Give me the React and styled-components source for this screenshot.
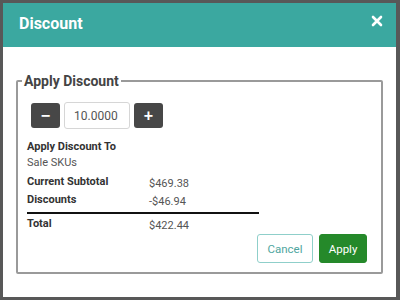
import React from "react";
import styled, { createGlobalStyle } from "styled-components";

const GlobalStyle = createGlobalStyle`
  html, body {
    margin: 0;
    padding: 0;
    width: 400px;
    height: 300px;
    background: #585858;
    font-family: Roboto, "Liberation Sans", sans-serif;
    overflow: hidden;
  }
`;

const Backdrop = styled.div`
  width: 400px;
  height: 300px;
  padding: 3px 4px 3px 3px;
  box-sizing: border-box;
`;

const Modal = styled.div`
  width: 393px;
  height: 294px;
  background: #fff;
  display: flex;
  flex-direction: column;
`;

const Header = styled.div`
  height: 44px;
  background: #3ba8a0;
  display: flex;
  align-items: center;
  justify-content: space-between;
  padding: 0 13px 4px 16px;
  box-sizing: border-box;
`;

const Title = styled.h2`
  margin: 0;
  color: #fff;
  font-size: 16px;
  font-weight: 700;
`;

const Close = styled.button`
  border: 0;
  background: none;
  padding: 0;
  width: 12px;
  height: 12px;
  margin-top: -5px;
  cursor: pointer;
  display: flex;
`;

const Body = styled.div`
  padding: 26px 13px 0 13px;
`;

const Fieldset = styled.fieldset`
  margin: 0;
  border: 2px solid #9a9a9a;
  border-radius: 2px;
  padding: 13px 14px 10px 9px;
  height: 201px;
  box-sizing: border-box;
  display: flex;
  flex-direction: column;
`;

const Legend = styled.legend`
  font-size: 14px;
  font-weight: 700;
  color: #444;
  padding: 0 2px;
  margin-left: -5px;
`;

const Stepper = styled.div`
  display: flex;
  align-items: center;
  gap: 4px;
  margin: 0 0 10px 4px;
`;

const StepButton = styled.button`
  width: 29px;
  height: 25px;
  border: 0;
  border-radius: 3px;
  background: #474747;
  color: #fff;
  font-size: 16px;
  font-weight: 700;
  display: flex;
  align-items: center;
  justify-content: center;
  padding: 0;
`;

const Amount = styled.input`
  width: 66px;
  height: 27px;
  box-sizing: border-box;
  border: 1px solid #d6d6d6;
  border-radius: 3px;
  padding: 0 9px;
  font-family: inherit;
  font-size: 12px;
  color: #555;
`;

const Label = styled.div`
  font-size: 11px;
  font-weight: 700;
  color: #333;
  line-height: 16px;
`;

const Note = styled.div`
  font-size: 11px;
  color: #555;
  line-height: 16px;
  margin-bottom: 3px;
`;

const Row = styled.div`
  display: grid;
  grid-template-columns: 122px 1fr;
  width: 232px;
  font-size: 11px;
  line-height: 16px;
  color: #333;
  border-bottom: ${(p) => (p.$rule ? "2px solid #111" : "0")};
  padding-bottom: ${(p) => (p.$rule ? "2px" : "0")};
  margin-bottom: ${(p) => (p.$rule ? "2px" : "0")};
`;

const Key = styled.span`
  font-weight: 700;
`;

const Value = styled.span`
  color: #555;
  padding-top: 2px;
`;

const Actions = styled.div`
  display: flex;
  justify-content: flex-end;
  gap: 6px;
  margin-top: auto;
`;

const ActionButton = styled.button`
  height: 29px;
  width: ${(p) => (p.$primary ? "48px" : "56px")};
  padding: 0;
  border-radius: 3px;
  font-family: inherit;
  font-size: 11.5px;
  border: 1px solid ${(p) => (p.$primary ? "#25892a" : "#8fcfca")};
  background: ${(p) => (p.$primary ? "#25892a" : "#fff")};
  color: ${(p) => (p.$primary ? "#fff" : "#4fa6a0")};
`;

export default function App() {
  return (
    <Backdrop>
      <GlobalStyle />
      <Modal>
        <Header>
          <Title>Discount</Title>
          <Close aria-label="Close">
            <svg width="12" height="12" viewBox="0 0 12 12">
              <path d="M2 2 L10 10 M10 2 L2 10" stroke="#fff" strokeWidth="2.6" strokeLinecap="round" />
            </svg>
          </Close>
        </Header>
        <Body>
          <Fieldset>
            <Legend>Apply Discount</Legend>
            <Stepper>
              <StepButton>−</StepButton>
              <Amount defaultValue="10.0000" />
              <StepButton>+</StepButton>
            </Stepper>
            <Label>Apply Discount To</Label>
            <Note>Sale SKUs</Note>
            <Row>
              <Key>Current Subtotal</Key>
              <Value>$469.38</Value>
            </Row>
            <Row $rule>
              <Key>Discounts</Key>
              <Value>-$46.94</Value>
            </Row>
            <Row>
              <Key>Total</Key>
              <Value>$422.44</Value>
            </Row>
            <Actions>
              <ActionButton>Cancel</ActionButton>
              <ActionButton $primary>Apply</ActionButton>
            </Actions>
          </Fieldset>
        </Body>
      </Modal>
    </Backdrop>
  );
}
